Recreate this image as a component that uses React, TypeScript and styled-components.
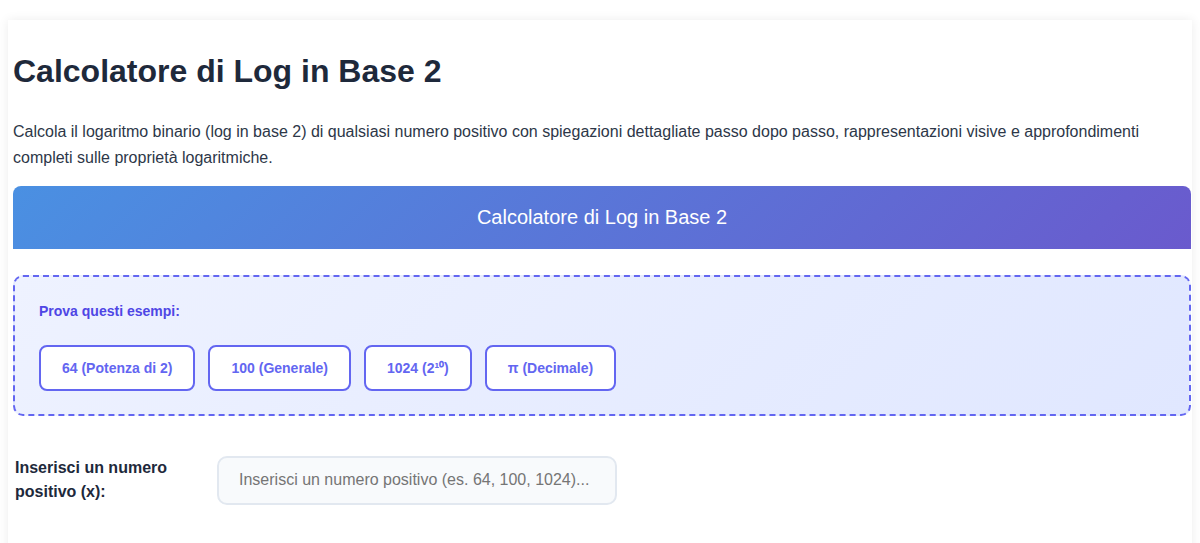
import React from "react";
import styled, { createGlobalStyle } from "styled-components";

const GlobalStyle = createGlobalStyle`
  html, body {
    margin: 0;
    padding: 0;
    background: #ffffff;
    font-family: "Liberation Sans", Arial, sans-serif;
  }
  * { box-sizing: border-box; }
`;

const Page = styled.div`
  padding: 20px 8px 0;
`;

const Card = styled.main`
  background: #ffffff;
  box-shadow: 0 0 10px rgba(0, 0, 0, 0.08);
  padding: 32px 1px 40px 5px;
  min-height: 600px;
`;

const Title = styled.h1`
  margin: 0 0 29px;
  font-size: 32px;
  line-height: 1.2;
  font-weight: 700;
  color: #1e293b;
`;

const Intro = styled.p`
  margin: 0 0 15px;
  font-size: 16px;
  line-height: 1.6;
  color: #2d3748;
`;

const Banner = styled.div`
  background: linear-gradient(135deg, #4a90e2 0%, #6a5acd 100%);
  border-radius: 8px 8px 0 0;
  color: #ffffff;
  font-size: 20px;
  line-height: 23px;
  padding: 20px;
  text-align: center;
`;

const Body = styled.section`
  padding-top: 26px;
`;

const Examples = styled.div`
  border: 2px dashed #6366f1;
  border-radius: 10px;
  background: linear-gradient(135deg, #eef2ff 0%, #e0e7ff 100%);
  padding: 24px 24px 23px;
`;

const ExamplesTitle = styled.div`
  font-size: 14px;
  line-height: 20px;
  font-weight: 700;
  color: #4f46e5;
  margin-bottom: 24px;
`;

const ExampleRow = styled.div`
  display: flex;
  flex-wrap: wrap;
  gap: 13px;
`;

const ExampleButton = styled.button`
  font-family: inherit;
  font-size: 14px;
  line-height: 20px;
  font-weight: 700;
  color: #6366f1;
  background: #ffffff;
  border: 2px solid #6366f1;
  border-radius: 8px;
  padding: 11px 21px;
  cursor: pointer;
`;

const Field = styled.div`
  display: flex;
  align-items: flex-start;
  gap: 20px;
  margin-top: 40px;
  padding-left: 2px;
`;

const Label = styled.label`
  width: 182px;
  font-size: 16px;
  line-height: 24px;
  font-weight: 700;
  color: #1e293b;
`;

const Input = styled.input`
  width: 400px;
  height: 49px;
  font-family: inherit;
  font-size: 16px;
  padding: 0 20px;
  background: #f8fafc;
  border: 2px solid #e2e8f0;
  border-radius: 10px;
  color: #1e293b;
  outline: none;
  &::placeholder {
    color: #757575;
  }
`;

const examples = ["64 (Potenza di 2)", "100 (Generale)", "1024 (2¹⁰)", "π (Decimale)"];

export default function App() {
  return (
    <>
      <GlobalStyle />
      <Page>
        <Card>
          <Title>Calcolatore di Log in Base 2</Title>
          <Intro>
            Calcola il logaritmo binario (log in base 2) di qualsiasi numero positivo con spiegazioni
            dettagliate passo dopo passo, rappresentazioni visive e approfondimenti completi sulle
            proprietà logaritmiche.
          </Intro>
          <Banner>Calcolatore di Log in Base 2</Banner>
          <Body>
            <Examples>
              <ExamplesTitle>Prova questi esempi:</ExamplesTitle>
              <ExampleRow>
                {examples.map((e) => (
                  <ExampleButton key={e}>{e}</ExampleButton>
                ))}
              </ExampleRow>
            </Examples>
            <Field>
              <Label htmlFor="x">Inserisci un numero positivo (x):</Label>
              <Input id="x" type="text" placeholder="Inserisci un numero positivo (es. 64, 100, 1024)..." />
            </Field>
          </Body>
        </Card>
      </Page>
    </>
  );
}
